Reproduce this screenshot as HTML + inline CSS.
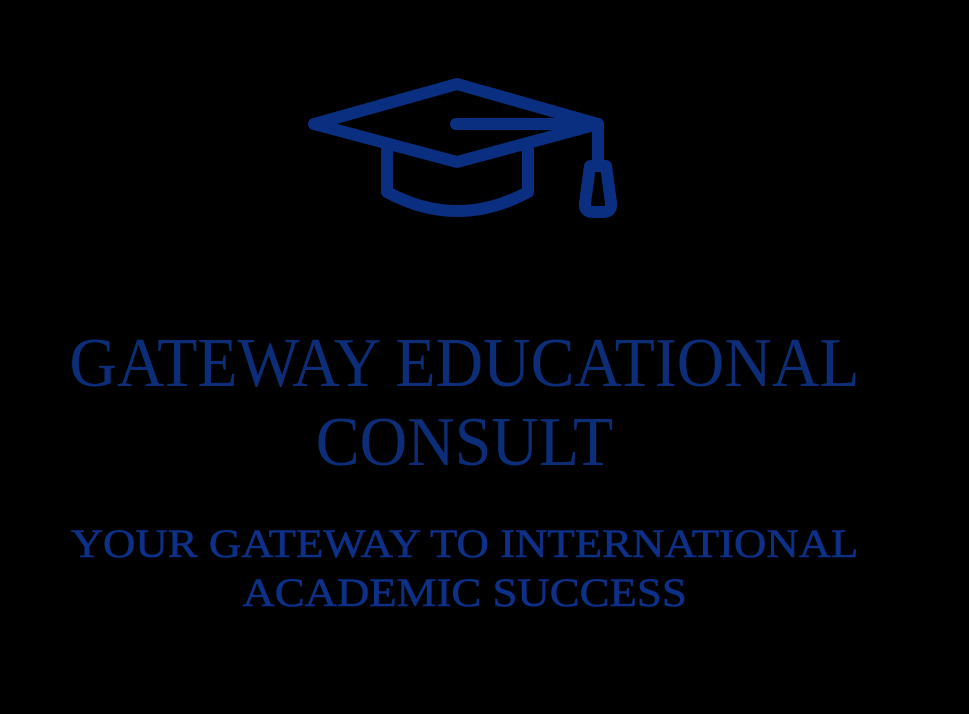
<!DOCTYPE html>
<html><head><style>
html,body{margin:0;padding:0;background:#000;width:969px;height:714px;overflow:hidden}
.t{position:absolute;left:0;width:929px;text-align:center;font-family:"Liberation Serif",serif;color:#0c2d78;white-space:nowrap;line-height:1;transform-origin:464px 0}
</style></head><body>
<svg style="position:absolute;left:0;top:0" width="969" height="714">
<g fill="none" stroke="#0a2f80" stroke-width="12" stroke-linecap="round" stroke-linejoin="round">
<path d="M314 124 L457 84 L598 124 L457 162 Z"/>
<path d="M456 124 L598 124 L598 166"/>
<path d="M387 150 V192 Q457 230 528 192 V150"/>
<path d="M590 166 H606 L611 203 Q612 212 603 212 H593 Q584 212 585 203 Z"/>
</g>
</svg>
<div class="t" style="top:329px;font-size:70px;transform:scaleX(0.94)">GATEWAY EDUCATIONAL</div>
<div class="t" style="top:408px;font-size:70px;transform:scaleX(0.94)">CONSULT</div>
<div class="t" style="top:524px;font-size:40px;transform:scaleX(1.12);color:#0d3088;-webkit-text-stroke:0.6px #0d3088">YOUR GATEWAY TO INTERNATIONAL</div>
<div class="t" style="top:573px;font-size:40px;transform:scaleX(1.12);color:#0d3088;-webkit-text-stroke:0.6px #0d3088">ACADEMIC SUCCESS</div>
</body></html>
